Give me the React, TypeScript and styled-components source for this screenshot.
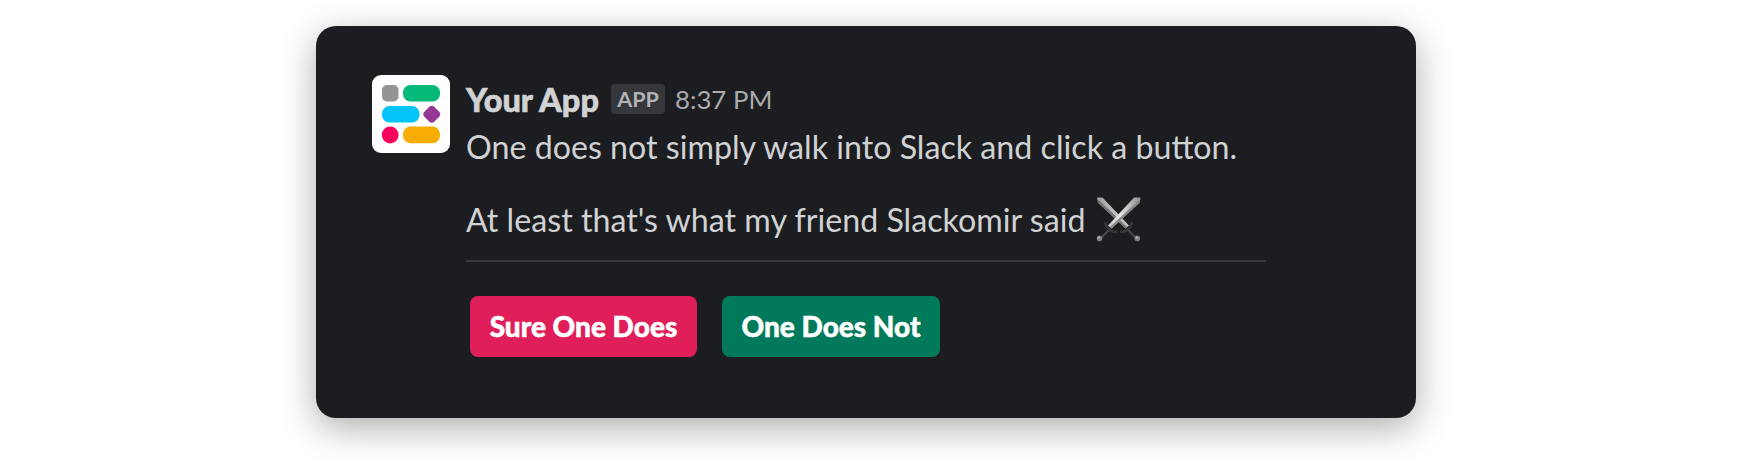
import React from 'react';
import styled, { createGlobalStyle } from 'styled-components';

const GlobalStyle = createGlobalStyle`
  * { box-sizing: border-box; }
  body { margin: 0; background: #fff; font-family: Lato, sans-serif; overflow: hidden; }
`;

const Page = styled.main`
  height: 464px;
  padding: 26px 322px 46px 316px;
`;

const Card = styled.section`
  display: flex;
  align-items: flex-start;
  gap: 16px;
  height: 392px;
  padding: 49px 56px 0;
  border-radius: 20px;
  background: #1c1d21;
  box-shadow: 0 10px 36px rgba(0, 0, 0, 0.32);
`;

const Avatar = styled.svg`
  flex: none;
  width: 78px;
  height: 78px;
  border-radius: 9px;
  background: #fff;
`;

const Message = styled.div`
  width: 800px;
`;

const Header = styled.header`
  display: flex;
  align-items: center;
  height: 48px;
`;

const Author = styled.span`
  width: 133px;
  font-size: 32.5px;
  font-weight: 900;
  color: #d1d2d3;
  -webkit-text-stroke: 0.6px #d1d2d3;
  white-space: nowrap;
`;

const Badge = styled.span`
  display: flex;
  align-items: center;
  justify-content: center;
  width: 54px;
  height: 30px;
  margin: 0 10px 0 12px;
  border-radius: 4px;
  background: #35373b;
  color: #b2b3b5;
  font-size: 21.5px;
  font-weight: 700;
`;

const Time = styled.time`
  font-size: 25.8px;
  color: #ababad;
`;

const Line = styled.p`
  display: flex;
  align-items: center;
  height: 48px;
  margin: 0 0 25px;
  font-size: 32.2px;
  line-height: 48px;
  color: #d1d2d3;
  white-space: nowrap;
`;

const Swords = styled.svg`
  width: 46px;
  height: 46px;
  margin-left: 10.5px;
  margin-top: -1px;
`;

const Divider = styled.hr`
  height: 2px;
  margin: -9px 0 34px;
  border: 0;
  background: #35373b;
`;

const Actions = styled.div`
  display: flex;
  gap: 25px;
  padding-left: 4px;
`;

const Button = styled.button<{ $color: string; $width: number }>`
  width: ${(p) => p.$width}px;
  height: 60.5px;
  padding: 0;
  border: 0;
  border-radius: 8px;
  background: ${(p) => p.$color};
  color: #fff;
  font: 900 28px/60px Lato, sans-serif;
  -webkit-text-stroke: 0.5px #fff;
  white-space: nowrap;
`;

export default function App() {
  return (
    <>
      <GlobalStyle />
      <Page>
        <Card>
          <Avatar viewBox="0 0 78 78">
            <rect x="10" y="10" width="16.5" height="16.5" rx="5" fill="#949496" />
            <rect x="31" y="10" width="37" height="16.5" rx="7.5" fill="#05ba79" />
            <rect x="10" y="31" width="37.5" height="16.5" rx="7.5" fill="#05c5f7" />
            <rect x="52.8" y="32.2" width="14" height="14" rx="3.8" fill="#953795" transform="rotate(45 59.8 39.2)" />
            <circle cx="18.2" cy="60" r="8.4" fill="#f8005c" />
            <rect x="31" y="51.5" width="37" height="16.7" rx="7.5" fill="#f7ad05" />
          </Avatar>
          <Message>
            <Header>
              <Author>Your App</Author>
              <Badge>APP</Badge>
              <Time>8:37 PM</Time>
            </Header>
            <Line>One does not simply walk into Slack and click a button.</Line>
            <Line>
              At least that's what my friend Slackomir said
              <Swords viewBox="0 0 46 46" role="img" aria-label="Crossed swords">
                <defs>
                  <linearGradient id="bladeFall" x1="0" y1="0" x2="1" y2="1">
                    <stop offset="0" stopColor="#9c9d9d" />
                    <stop offset="0.6" stopColor="#c4c5c5" />
                    <stop offset="1" stopColor="#bcbcbc" />
                  </linearGradient>
                  <linearGradient id="bladeRise" x1="1" y1="0" x2="0" y2="1">
                    <stop offset="0" stopColor="#929393" />
                    <stop offset="0.6" stopColor="#e6e6e6" />
                    <stop offset="1" stopColor="#c4c4c4" />
                  </linearGradient>
                </defs>
                <g>
                  <path d="M31 32 41 42" stroke="#494b4e" strokeWidth="2" />
                  <path d="M1 .5h5.5L33 28.5l-3.5 3L2 5.5z" fill="url(#bladeFall)" />
                  <path d="M1 1.5 31 30l-1.5 1.5L2 6z" fill="#707274" />
                  <path d="M24 35q10 0 12-10" fill="none" stroke="#35373a" strokeWidth="2.6" />
                  <circle cx="41.3" cy="41.4" r="2.8" fill="#7c7e80" />
                  <circle cx="40.8" cy="40.7" r="1.2" fill="#aaa" />
                </g>
                <g>
                  <path d="M14 32 4 42" stroke="#494b4e" strokeWidth="2" />
                  <path d="M44.5 .5H38L12 28.5l3.5 3L43.5 5.5z" fill="url(#bladeRise)" />
                  <path d="M44.5 1.5 14 30l1.5 1.5L43.5 6z" fill="#858688" />
                  <path d="M21 35q-10 0-12-10" fill="none" stroke="#35373a" strokeWidth="2.6" />
                  <circle cx="3.5" cy="41.4" r="2.8" fill="#7c7e80" />
                  <circle cx="3" cy="40.7" r="1.2" fill="#aaa" />
                </g>
              </Swords>
            </Line>
            <Divider />
            <Actions>
              <Button $color="#e01e5a" $width={227}>Sure One Does</Button>
              <Button $color="#007a5a" $width={218}>One Does Not</Button>
            </Actions>
          </Message>
        </Card>
      </Page>
    </>
  );
}
